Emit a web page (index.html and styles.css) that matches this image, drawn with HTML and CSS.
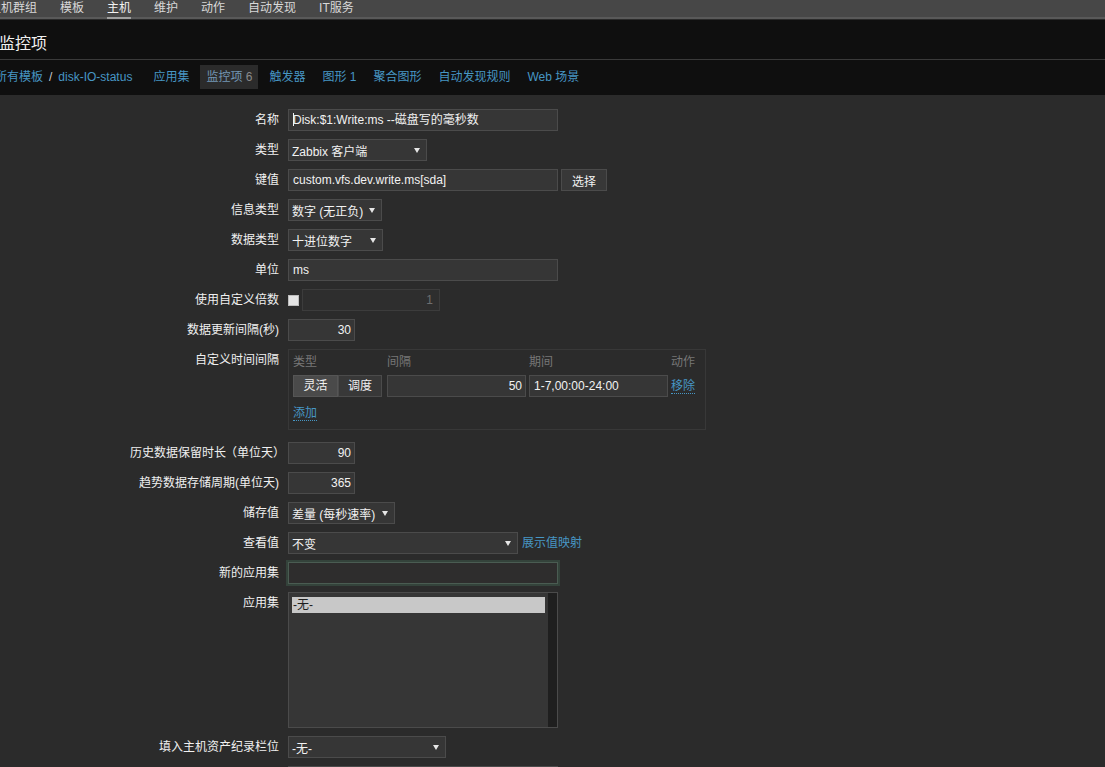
FILE: index.html
```html
<!DOCTYPE html>
<html lang="zh-CN">
<head>
<meta charset="utf-8">
<title>监控项</title>
<link rel="stylesheet" href="styles.css">
</head>
<body>
<div class="topnav">
  <ul class="menu">
    <li>主机群组</li>
    <li>模板</li>
    <li class="on">主机</li>
    <li>维护</li>
    <li>动作</li>
    <li>自动发现</li>
    <li>IT服务</li>
  </ul>
</div>
<header class="header">
  <h1>监控项</h1>
</header>
<nav class="tabs">
  <a class="crumb first">所有模板</a><span class="sep">/</span><a class="crumb">disk-IO-status</a>
  <ul class="tablist">
    <li><a>应用集</a></li>
    <li class="active">监控项 <span class="cnt">6</span></li>
    <li><a>触发器</a></li>
    <li><a>图形 <span class="cnt">1</span></a></li>
    <li><a>聚合图形</a></li>
    <li><a>自动发现规则</a></li>
    <li><a>Web 场景</a></li>
  </ul>
</nav>
<main class="main">
  <div class="form">
    <div class="lbl">名称</div>
    <div class="fld"><div class="in w270 caret">Disk:$1:Write:ms --磁盘写的毫秒数</div></div>

    <div class="lbl">类型</div>
    <div class="fld"><div class="select w139"><span>Zabbix 客户端</span><i class="arr"></i></div></div>

    <div class="lbl">键值</div>
    <div class="fld"><div class="in w270">custom.vfs.dev.write.ms[sda]</div><button class="btn">选择</button></div>

    <div class="lbl">信息类型</div>
    <div class="fld"><div class="select w94"><span>数字 (无正负)</span><i class="arr"></i></div></div>

    <div class="lbl">数据类型</div>
    <div class="fld"><div class="select w95"><span>十进位数字</span><i class="arr"></i></div></div>

    <div class="lbl">单位</div>
    <div class="fld"><div class="in w270">ms</div></div>

    <div class="lbl">使用自定义倍数</div>
    <div class="fld"><span class="check"></span><div class="in num dis w138">1</div></div>

    <div class="lbl">数据更新间隔(秒)</div>
    <div class="fld"><div class="in num w67">30</div></div>

    <div class="lbl">自定义时间间隔</div>
    <div class="fld">
      <div class="intervals">
        <div class="ih">类型</div><div class="ih">间隔</div><div class="ih">期间</div><div class="ih">动作</div>
        <div class="seg"><span class="on">灵活</span><span>调度</span></div>
        <div class="in num w139">50</div>
        <div class="in w139">1-7,00:00-24:00</div>
        <div class="cell"><a class="act">移除</a></div>
        <div class="addrow"><a class="act">添加</a></div>
      </div>
    </div>

    <div class="lbl">历史数据保留时长<span class="po">（</span>单位天<span class="pc">）</span></div>
    <div class="fld"><div class="in num w67">90</div></div>

    <div class="lbl">趋势数据存储周期(单位天)</div>
    <div class="fld"><div class="in num w67">365</div></div>

    <div class="lbl">储存值</div>
    <div class="fld"><div class="select w107"><span>差量 (每秒速率)</span><i class="arr"></i></div></div>

    <div class="lbl">查看值</div>
    <div class="fld"><div class="select w230"><span>不变</span><i class="arr"></i></div><a class="link">展示值映射</a></div>

    <div class="lbl">新的应用集</div>
    <div class="fld"><div class="in w270 focus"></div></div>

    <div class="lbl">应用集</div>
    <div class="fld">
      <div class="listbox">
        <div class="opts"><div class="opt sel">-无-</div></div>
        <div class="sb"></div>
      </div>
    </div>

    <div class="lbl">填入主机资产纪录栏位</div>
    <div class="fld"><div class="select w158"><span>-无-</span><i class="arr"></i></div></div>

    <div class="lbl"></div>
    <div class="fld"><div class="in w270 tall"></div></div>
  </div>
</main>
</body>
</html>
```

FILE: styles.css
```css
html, body {
  margin: 0;
  padding: 0;
}
body {
  width: 1105px;
  height: 767px;
  overflow: hidden;
  background: #2b2b2b;
  color: #f0f0f0;
  font-family: "Liberation Sans", "Noto Sans CJK SC", sans-serif;
  font-size: 12px;
}
ul { list-style: none; margin: 0; padding: 0; }
a { cursor: pointer; }

/* top menu */
.topnav {
  height: 19px;
  background: #474747;
  box-shadow: inset 0 -2px 0 #595959;
}
.menu {
  display: flex;
  gap: 23px;
  margin-left: -11px;
}
.menu li {
  height: 19px;
  box-sizing: border-box;
  line-height: 16px;
  color: #d8d8d8;
  white-space: nowrap;
}
.menu li.on {
  color: #f2f2f2;
  border-bottom: 2px solid #a0a0a0;
}

/* header */
.header {
  height: 39px;
  background: #0f0f0f;
  border-top: 1px solid #2a2a2a;
  border-bottom: 1px solid #3a3a3a;
}
.header h1 {
  margin: 0 0 0 -1px;
  padding-top: 14px;
  font-size: 16px;
  line-height: 20px;
  font-weight: normal;
  color: #f0f0f0;
}

/* tabs */
.tabs {
  height: 35px;
  box-sizing: border-box;
  padding-top: 5px;
  background: #0f0f0f;
  display: flex;
  align-items: flex-start;
  line-height: 24px;
  white-space: nowrap;
}
.crumb { color: #4796c4; }
.crumb.first { margin-left: -5px; }
.sep { color: #d0d0d0; margin: 0 6px; }
.tablist {
  display: flex;
  gap: 5px;
  margin-left: 15px;
}
.tablist li {
  padding: 0 6px;
  height: 24px;
}
.tablist li a { color: #4796c4; }
.tablist li.active {
  background: #2b2b2b;
  color: #7396b4;
}
.tablist .cnt { color: inherit; }
.tablist li.active .cnt { color: #8a8a8a; }

/* form */
.main {
  padding-top: 14px;
}
.form {
  display: grid;
  grid-template-columns: 279px max-content;
  column-gap: 9px;
  row-gap: 8px;
  align-items: start;
}
.lbl {
  text-align: right;
  line-height: 22px;
  white-space: nowrap;
  color: #f0f0f0;
}
.lbl .po { margin-left: -1px; }
.lbl .pc { margin-right: -6px; }
.fld {
  display: flex;
  align-items: center;
  min-height: 22px;
}

.in {
  height: 22px;
  box-sizing: border-box;
  border: 1px solid #4b4b4b;
  background: #363636;
  color: #f2f2f2;
  padding: 0 4px;
  line-height: 20px;
  white-space: nowrap;
  overflow: hidden;
}
.in.num { text-align: right; padding-right: 3px; }
.in.dis {
  background: #2e2e2e;
  border-color: #3c3c3c;
  color: #6e6e6e;
  padding-right: 6px;
}
.in.focus {
  background: #2e2d2d;
  border-color: #4a5c52;
  box-shadow: 0 0 0 2px #34433b;
}
.in.tall { height: 60px; }
.caret::before {
  content: "";
  display: inline-block;
  width: 1px;
  height: 13px;
  background: #f2f2f2;
  vertical-align: -2px;
  margin-right: -1px;
}

.w67 { width: 67px; }
.w94 { width: 94px; }
.w95 { width: 95px; }
.w107 { width: 107px; }
.w138 { width: 138px; }
.w139 { width: 139px; }
.w158 { width: 158px; }
.w230 { width: 230px; }
.w270 { width: 270px; }

.select {
  height: 22px;
  box-sizing: border-box;
  border: 1px solid #4b4b4b;
  background: #363636;
  color: #f2f2f2;
  padding: 0 6px 0 3px;
  display: flex;
  align-items: center;
  justify-content: space-between;
  white-space: nowrap;
}
.arr {
  width: 0;
  height: 0;
  border-left: 3px solid transparent;
  border-right: 3px solid transparent;
  border-top: 5px solid #e6e6e6;
  flex: none;
}

.btn {
  margin-left: 3px;
  width: 46px;
  height: 22px;
  box-sizing: border-box;
  border: 1px solid #4b4b4b;
  background: #383838;
  color: #f2f2f2;
  font: inherit;
  padding: 0;
}

.check {
  width: 11px;
  height: 11px;
  box-sizing: border-box;
  background: #e4e4e4;
  border: 1px solid #bdbdbd;
  margin-right: 3px;
}

.link {
  color: #4796c4;
  margin-left: 4px;
  line-height: 22px;
}

/* custom intervals */
.intervals {
  width: 418px;
  box-sizing: border-box;
  border: 1px solid #383838;
  padding: 3px 4px 6px 4px;
  margin-bottom: 4px;
  display: grid;
  grid-template-columns: 94px 142px 142px 1fr;
  row-gap: 4px;
  align-items: center;
}
.ih {
  color: #777;
  line-height: 18px;
}
.seg {
  display: flex;
}
.seg span {
  height: 22px;
  box-sizing: border-box;
  line-height: 20px;
  border: 1px solid #4b4b4b;
  background: #383838;
  text-align: center;
  width: 44px;
}
.seg span.on {
  width: 45px;
  background: #4a4a4a;
  border-color: #555;
}
.cell { line-height: 22px; }
.act {
  color: #4796c4;
  border-bottom: 1px dotted #4796c4;
}
.addrow {
  grid-column: 1 / -1;
  line-height: 20px;
  margin-top: 2px;
}

/* listbox */
.listbox {
  width: 270px;
  height: 136px;
  box-sizing: border-box;
  border: 1px solid #4b4b4b;
  background: #363636;
  display: flex;
}
.opts {
  flex: 1;
  padding: 4px 3px;
}
.opt {
  height: 16px;
  line-height: 16px;
  padding-left: 1px;
}
.opt.sel {
  background: #c8c8c8;
  color: #1e1e1e;
}
.sb {
  width: 9px;
  background: #1f1f1f;
}
```
